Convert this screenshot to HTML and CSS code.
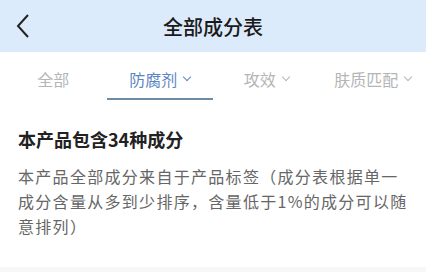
FILE: index.html
```html
<!DOCTYPE html>
<html>
<head>
  <meta charset="utf-8">
  <title>全部成分表</title>
  <link rel="stylesheet" href="styles.css">
</head>
<body>

  <div class="header">
    <svg class="back" width="16" height="26" viewBox="0 0 16 26">
      <polyline points="13,2 3,13 13,24" fill="none" stroke="#222" stroke-width="2"/>
    </svg>
    <h1>全部成分表</h1>
  </div>

  <div class="tabs">
    <div class="tab">全部</div>
    <div class="tab active">防腐剂<span class="arrow"></span></div>
    <div class="tab">攻效<span class="arrow"></span></div>
    <div class="tab">肤质匹配<span class="arrow"></span></div>
  </div>

  <div class="content">
    <h2>本产品包含34种成分</h2>
    <p>本产品全部成分来自于产品标签（成分表根据单一成分含量从多到少排序，含量低于1%的成分可以随意排列）</p>
  </div>

  <div class="footer"></div>

</body>
</html>
```

FILE: styles.css
```css
body {
  margin: 0;
  font-family: "Noto Sans CJK SC", "Noto Sans", sans-serif;
  background: #fff;
  width: 426px;
  height: 272px;
  overflow: hidden;
}

.header {
  height: 52px;
  background: #dcebfb;
  display: flex;
  align-items: center;
  justify-content: center;
  position: relative;
}

.header h1 {
  margin: 0;
  font-size: 20px;
  font-weight: 500;
  color: #1a1a1a;
}

.back {
  position: absolute;
  left: 15px;
  top: 13px;
}

.tabs {
  display: flex;
  height: 48px;
}

.tab {
  flex: 1;
  display: flex;
  align-items: center;
  justify-content: center;
  padding-top: 8px;
  font-size: 16px;
  color: #b5b5b5;
  box-sizing: border-box;
  border-bottom: 2px solid transparent;
}

.tab.active {
  color: #5b86c3;
  border-bottom-color: #6e8ca2;
}

.arrow {
  width: 5px;
  height: 5px;
  border-right: 1px solid currentColor;
  border-bottom: 1px solid currentColor;
  transform: rotate(45deg);
  margin: -4px 0 0 7px;
}

.content {
  padding: 26px 18px 0;
}

.content h2 {
  margin: 0;
  font-size: 18px;
  font-weight: bold;
  color: #222;
  line-height: 26px;
}

.content p {
  margin: 12px 0 0;
  font-size: 16px;
  line-height: 25px;
  color: #666;
  letter-spacing: 1.3px;
}

.footer {
  margin-top: 28px;
  height: 8px;
  background: #f7f7f7;
}
```
